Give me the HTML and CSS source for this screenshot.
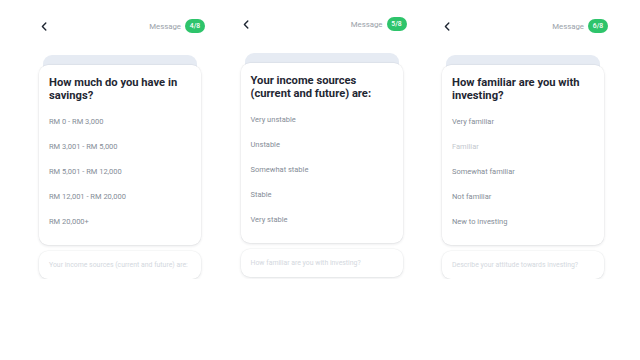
FILE: index.html
```html
<!DOCTYPE html>
<html lang="en">
<head>
  <meta charset="UTF-8" />
  <meta name="viewport" content="width=device-width, initial-scale=1.0" />
  <title>Risk Profile Questions</title>
  <link rel="stylesheet" href="styles.css">
</head>
<body>
  <div class="screens">
    <div class="screen">
      <div class="top-bar">
        <svg class="back" width="6" height="9" viewBox="0 0 6 9"><path d="M4.8 1 L1.4 4.5 L4.8 8" fill="none" stroke="#1f2733" stroke-width="1.4" stroke-linecap="round" stroke-linejoin="round"/></svg>
        <span class="message">Message</span>
        <span class="badge">4/8</span>
      </div>
      <div class="stack"></div>
      <div class="card">
        <h2>How much do you have in savings?</h2>
        <ul class="options">
          <li>RM 0 - RM 3,000</li>
          <li>RM 3,001 - RM 5,000</li>
          <li>RM 5,001 - RM 12,000</li>
          <li>RM 12,001 - RM 20,000</li>
          <li>RM 20,000+</li>
        </ul>
      </div>
      <div class="next-card">Your income sources (current and future) are:</div>
    </div>

    <div class="screen screen-raised">
      <div class="top-bar">
        <svg class="back" width="6" height="9" viewBox="0 0 6 9"><path d="M4.8 1 L1.4 4.5 L4.8 8" fill="none" stroke="#1f2733" stroke-width="1.4" stroke-linecap="round" stroke-linejoin="round"/></svg>
        <span class="message">Message</span>
        <span class="badge">5/8</span>
      </div>
      <div class="stack"></div>
      <div class="card">
        <h2>Your income sources (current and future) are:</h2>
        <ul class="options">
          <li>Very unstable</li>
          <li>Unstable</li>
          <li>Somewhat stable</li>
          <li>Stable</li>
          <li>Very stable</li>
        </ul>
      </div>
      <div class="next-card">How familiar are you with investing?</div>
    </div>

    <div class="screen">
      <div class="top-bar">
        <svg class="back" width="6" height="9" viewBox="0 0 6 9"><path d="M4.8 1 L1.4 4.5 L4.8 8" fill="none" stroke="#1f2733" stroke-width="1.4" stroke-linecap="round" stroke-linejoin="round"/></svg>
        <span class="message">Message</span>
        <span class="badge">6/8</span>
      </div>
      <div class="stack"></div>
      <div class="card">
        <h2>How familiar are you with investing?</h2>
        <ul class="options">
          <li>Very familiar</li>
          <li class="faded">Familiar</li>
          <li>Somewhat familiar</li>
          <li>Not familiar</li>
          <li>New to investing</li>
        </ul>
      </div>
      <div class="next-card">Describe your attitude towards investing?</div>
    </div>
  </div>
</body>
</html>
```

FILE: styles.css
```css
body {
  margin: 0;
  background-color: #ffffff;
  font-family: Roboto, "Liberation Sans", sans-serif;
}
.screens {
  display: flex;
  align-items: flex-start;
  gap: 35.5px;
  padding-left: 39px;
}
.screen {
  width: 166px;
  padding-top: 19px;
}
.screen-raised {
  padding-top: 17px;
}
.top-bar {
  display: flex;
  align-items: center;
  height: 14px;
  padding-left: 2px;
}
.back {
  display: block;
}
.message {
  margin-left: auto;
  font-size: 7.8px;
  color: #9aa1a9;
}
.badge {
  margin-left: 4px;
  width: 20px;
  height: 14px;
  line-height: 14px;
  border-radius: 7px;
  background-color: #2ec46b;
  color: #ffffff;
  font-size: 6.8px;
  font-weight: 500;
  text-align: center;
}
.stack {
  width: 154px;
  height: 12px;
  margin: 22px 0 0 4px;
  background-color: #e6ebf3;
  border-radius: 9px 9px 0 0;
}
.card {
  width: 162px;
  box-sizing: border-box;
  margin-top: -2px;
  padding: 11px 10px 10px;
  background-color: #ffffff;
  border-radius: 9px;
  box-shadow: 0 1px 3px rgba(30, 40, 60, 0.12), 0 0 0 0.5px rgba(30, 40, 60, 0.05);
  position: relative;
}
.card h2 {
  margin: 0;
  font-size: 11.2px;
  line-height: 13.3px;
  font-weight: 700;
  color: #1f2733;
}
.options {
  list-style: none;
  margin: 6px 0 0;
  padding: 0;
}
.options li {
  height: 25.2px;
  line-height: 25.2px;
  font-size: 7.5px;
  color: #858d97;
}
.options li.faded {
  color: #c3c8ce;
}
.next-card {
  width: 162px;
  box-sizing: border-box;
  margin-top: 6px;
  height: 28px;
  line-height: 28px;
  padding-left: 10px;
  background-color: #ffffff;
  border-radius: 9px;
  box-shadow: 0 1px 3px rgba(30, 40, 60, 0.12), 0 0 0 0.5px rgba(30, 40, 60, 0.04);
  font-size: 6.9px;
  color: #d3d8de;
  white-space: nowrap;
  overflow: hidden;
}
```
